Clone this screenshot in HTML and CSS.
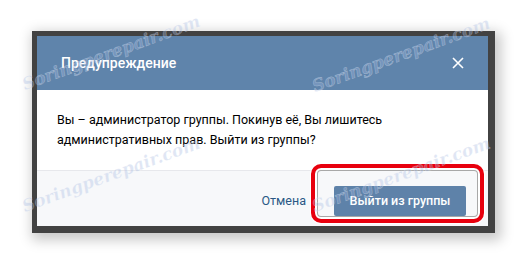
FILE: index.html
```html
<!DOCTYPE html>
<html lang="ru">
<head>
<meta charset="utf-8">
<link rel="stylesheet" href="styles.css">
</head>
<body>
<div class="stage">
  <div class="frame">
    <div class="dialog">
      <div class="header">
        <span class="title">Предупреждение</span>
        <svg class="close" width="12" height="12" viewBox="0 0 12 12"><path d="M1 1L11 11M11 1L1 11" stroke="#fff" stroke-width="1.6" fill="none"/></svg>
      </div>
      <div class="body">Вы – администратор группы. Покинув её, Вы лишитесь<br>административных прав. Выйти из группы?</div>
      <div class="footer">
        <span class="cancel">Отмена</span>
        <span class="btn">Выйти из группы</span>
      </div>
      <div class="highlight"></div>
    </div>
  </div>
  <div class="wm wm1">Soringperepair.com</div>
  <div class="wm wm2">Soringperepair.com</div>
  <div class="wm wm3">Soringperepair.com</div>
  <div class="wm wm4">Soringperepair.com</div>
</div>
</body>
</html>
```
FILE: styles.css
```css
html, body {
  margin: 0;
  padding: 0;
  background: #fff;
}
.stage {
  position: relative;
  width: 527px;
  height: 267px;
  padding: 31px 0 0 32px;
  box-sizing: border-box;
  font-family: Roboto, "Liberation Sans", sans-serif;
  overflow: hidden;
}
.frame {
  width: 451px;
  background: #424242;
  padding: 5px 7px 7px 5px;
  box-shadow: 3px 4px 12px 3px rgba(0,0,0,0.22);
}
.dialog {
  position: relative;
  background: #fff;
}
.header {
  height: 54px;
  background: #5f84ab;
  display: flex;
  align-items: center;
  justify-content: space-between;
  padding: 0 24px 0 24px;
}
.title {
  color: #fff;
  font-size: 14px;
  font-weight: 500;
}
.close {
  display: block;
}
.body {
  padding: 20px 20px 21px 20px;
  font-size: 12.5px;
  line-height: 19.5px;
  color: #000;
}
.footer {
  border-top: 1px solid #e7e8ec;
  background: #f7f8fa;
  height: 56px;
  box-sizing: border-box;
  padding: 15px 22px 0 0;
  display: flex;
  justify-content: flex-end;
  align-items: flex-start;
  gap: 28px;
}
.cancel {
  color: #2a5885;
  font-size: 12.5px;
  line-height: 30px;
}
.btn {
  width: 132px;
  height: 30px;
  line-height: 30px;
  text-align: center;
  background: #5e82a9;
  color: #fff;
  font-size: 12.5px;
  font-weight: 500;
  border-radius: 2px;
}
.highlight {
  position: absolute;
  left: 274px;
  top: 128px;
  width: 173px;
  height: 59px;
  box-sizing: border-box;
  border: 4px solid #e8000e;
  border-radius: 10px;
  box-shadow: inset 0 0 0 2px #fff, inset 0 0 0 3px #a8a8a8, 0 0 0 1px #fff;
}
.wm {
  position: absolute;
  font-family: "DejaVu Serif", serif;
  font-style: italic;
  font-weight: bold;
  font-size: 17px;
  line-height: 20px;
  color: rgba(165, 185, 225, 0.35);
  -webkit-text-stroke: 0.5px rgba(255,255,255,0.35);
  transform: rotate(-20deg);
  transform-origin: left bottom;
  white-space: nowrap;
}
.wm1 { left: 26px; top: 74px; }
.wm2 { left: 316px; top: 76px; }
.wm3 { left: 26px; top: 196px; }
.wm4 { left: 316px; top: 196px; }
```
